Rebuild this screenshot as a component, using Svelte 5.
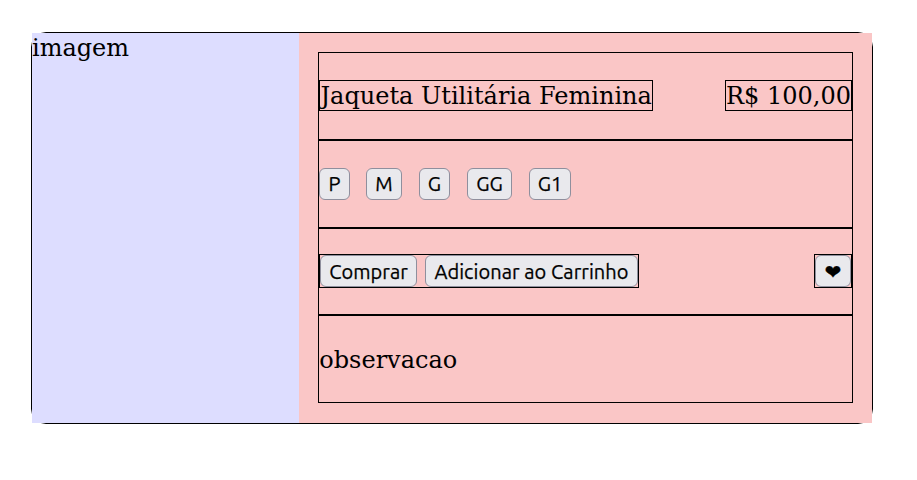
<script>
  const sizes = [
    { label: 'P', width: 31, gap: 16 },
    { label: 'M', width: 36, gap: 17 },
    { label: 'G', width: 31, gap: 17 },
    { label: 'GG', width: 45, gap: 17 },
    { label: 'G1', width: 42, gap: 0 }
  ];
</script>

<main class="card">
  <div class="image">imagem</div>
  <div class="details">
    <div class="row heading">
      <span class="outlined name">Jaqueta Utilitária Feminina</span>
      <span class="outlined">R$ 100,00</span>
    </div>
    <div class="row">
      {#each sizes as size}
        <button style:width="{size.width}px" style:margin-right="{size.gap}px">{size.label}</button>
      {/each}
    </div>
    <div class="row actions">
      <div class="outlined group">
        <button class="buy">Comprar</button>
        <button class="cart">Adicionar ao Carrinho</button>
      </div>
      <div class="outlined group">
        <button class="heart" aria-label="Favoritar">❤</button>
      </div>
    </div>
    <div class="row note">observacao</div>
  </div>
</main>

<style>
  :global(body) {
    margin: 0;
    background: #fff;
  }
  .card {
    box-sizing: border-box;
    display: flex;
    width: 842px;
    height: 392px;
    margin: 32px 0 0 31px;
    border: 1px solid #000;
    border-radius: 15px;
    font: 24px/29px 'DejaVu Serif', serif;
    color: #000;
  }
  .image {
    box-sizing: border-box;
    width: 267px;
    padding-top: 1px;
    background: #ddddff;
  }
  .details {
    box-sizing: border-box;
    display: grid;
    grid-template-rows: 88px 88px 87px 88px;
    width: 573px;
    padding: 19px;
    background: #fac6c6;
  }
  .row {
    box-sizing: border-box;
    display: flex;
    align-items: center;
    border: 1px solid #000;
  }
  .heading,
  .actions {
    justify-content: space-between;
    padding-bottom: 2px;
  }
  .outlined {
    border: 1px solid #000;
    white-space: nowrap;
  }
  .heading .outlined {
    padding-top: 1px;
    line-height: 28px;
  }
  .name {
    box-sizing: border-box;
    width: 334px;
    padding-left: 0.5px;
  }
  .note {
    padding: 2px 0 0 0.3px;
  }
  .group {
    display: flex;
    gap: 8px;
  }
  button {
    box-sizing: border-box;
    flex: none;
    height: 32px;
    margin: 0;
    padding: 0;
    border: 1px solid #8f8f9d;
    border-radius: 6px;
    background: #e9e9ed;
    color: #000;
    font: 20px/30px Ubuntu, 'Noto Sans', sans-serif;
    white-space: nowrap;
    -webkit-text-stroke: 0.25px #000;
  }
  .group button {
    padding-top: 2px;
    line-height: 28px;
  }
  .buy {
    width: 97px;
    letter-spacing: 0.06px;
  }
  .cart {
    width: 213px;
    letter-spacing: 0.06px;
  }
  .heart {
    width: 36px;
    font-family: 'DejaVu Sans', sans-serif;
  }
</style>
